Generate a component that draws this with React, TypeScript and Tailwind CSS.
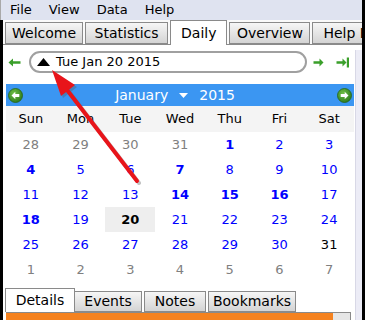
import React from 'react';

type Kind = 'other' | 'cur' | 'bold' | 'sel' | 'today';

const weeks: { d: string; kind: Kind }[][] = [
  [
    { d: '28', kind: 'other' },
    { d: '29', kind: 'other' },
    { d: '30', kind: 'other' },
    { d: '31', kind: 'other' },
    { d: '1', kind: 'bold' },
    { d: '2', kind: 'cur' },
    { d: '3', kind: 'cur' },
  ],
  [
    { d: '4', kind: 'bold' },
    { d: '5', kind: 'cur' },
    { d: '6', kind: 'cur' },
    { d: '7', kind: 'bold' },
    { d: '8', kind: 'cur' },
    { d: '9', kind: 'cur' },
    { d: '10', kind: 'cur' },
  ],
  [
    { d: '11', kind: 'cur' },
    { d: '12', kind: 'cur' },
    { d: '13', kind: 'cur' },
    { d: '14', kind: 'bold' },
    { d: '15', kind: 'bold' },
    { d: '16', kind: 'bold' },
    { d: '17', kind: 'cur' },
  ],
  [
    { d: '18', kind: 'bold' },
    { d: '19', kind: 'cur' },
    { d: '20', kind: 'sel' },
    { d: '21', kind: 'cur' },
    { d: '22', kind: 'cur' },
    { d: '23', kind: 'cur' },
    { d: '24', kind: 'cur' },
  ],
  [
    { d: '25', kind: 'cur' },
    { d: '26', kind: 'cur' },
    { d: '27', kind: 'cur' },
    { d: '28', kind: 'cur' },
    { d: '29', kind: 'cur' },
    { d: '30', kind: 'cur' },
    { d: '31', kind: 'today' },
  ],
  ['1', '2', '3', '4', '5', '6', '7'].map((d) => ({ d, kind: 'other' as const })),
];

const cellClass: Record<Kind, string> = {
  other: 'text-[#808080]',
  cur: 'text-[#0000ff]',
  bold: 'text-[#0000ff] font-bold',
  sel: 'text-black font-bold bg-[#eeeeee]',
  today: 'text-black',
};

function CircleArrow({ dir }: { dir: 'left' | 'right' }) {
  return (
    <svg width="15" height="15" viewBox="0 0 15 15">
      <defs>
        <radialGradient id={`g-${dir}`} cx="40%" cy="35%" r="70%">
          <stop offset="0%" stopColor="#6fbf45" />
          <stop offset="100%" stopColor="#2c7a1c" />
        </radialGradient>
      </defs>
      <circle cx="7.5" cy="7.5" r="7" fill={`url(#g-${dir})`} stroke="#25631a" strokeWidth="0.8" />
      {dir === 'left' ? (
        <path d="M3.5 7.5 L7.3 3.8 L7.3 6 L11.3 6 L11.3 9 L7.3 9 L7.3 11.2 Z" fill="#fff" />
      ) : (
        <path d="M11.5 7.5 L7.7 3.8 L7.7 6 L3.7 6 L3.7 9 L7.7 9 L7.7 11.2 Z" fill="#fff" />
      )}
    </svg>
  );
}

function GreenArrow({ dir, bar }: { dir: 'left' | 'right'; bar?: boolean }) {
  return dir === 'left' ? (
    <svg width="13" height="9" viewBox="0 0 13 9">
      <path d="M0.5 4.5 L5 0.5 L5 3.3 L12.5 3.3 L12.5 5.7 L5 5.7 L5 8.5 Z" fill="#3a9f2a" />
    </svg>
  ) : (
    <svg width={bar ? 13 : 11} height="11" viewBox={bar ? '0 0 13 11' : '0 0 11 11'}>
      <path d="M10.5 5.5 L6.5 1.5 L6.5 4.3 L0.5 4.3 L0.5 6.7 L6.5 6.7 L6.5 9.5 Z" fill="#3a9f2a" />
      {bar && <rect x="10.8" y="0.5" width="2.2" height="10" fill="#3a9f2a" />}
    </svg>
  );
}

function Tab({ label, active, w }: { label: string; active?: boolean; w: string }) {
  return active ? (
    <div className={`${w} h-[25px] bg-white border border-b-0 border-[#8a8a8a] flex items-center justify-center text-[14px] text-black -mb-px relative z-10`}>
      {label}
    </div>
  ) : (
    <div className={`${w} h-[22px] bg-gradient-to-b from-[#f6f6f6] to-[#d4d4d4] border border-[#8a8a8a] flex items-center justify-center text-[14px] text-black overflow-hidden whitespace-nowrap`}>
      {label}
    </div>
  );
}

export default function App() {
  return (
    <div className="w-[365px] h-[320px] relative overflow-hidden bg-white font-['DejaVu_Sans',sans-serif] border-r-[3px] border-black flex flex-col">
      {/* menu bar */}
      <div className="h-[20px] bg-[#dfe3f0] border-l border-[#a9a9a9] flex items-center gap-[17px] pl-[9px] text-[13px] text-black shrink-0">
        <span>File</span>
        <span>View</span>
        <span>Data</span>
        <span>Help</span>
      </div>

      <div className="flex-1 flex border-l-[3px] border-black min-h-0">
        <div className="flex-1 flex flex-col min-w-0">
          {/* top tabs */}
          <div className="h-[25px] flex items-end gap-[2px] pl-[2px] border-b border-[#8a8a8a] bg-[#fafafa] shrink-0">
            <Tab label="Welcome" w="w-[79px]" />
            <Tab label="Statistics" w="w-[84px]" />
            <Tab label="Daily" active w="w-[58px]" />
            <Tab label="Overview" w="w-[82px]" />
            <div className="w-[50px] h-[22px] bg-gradient-to-b from-[#f6f6f6] to-[#d4d4d4] border border-r-0 border-[#8a8a8a] flex items-center pl-[10px] text-[14px] text-black overflow-hidden whitespace-nowrap">
              Help B
            </div>
          </div>

          <div className="flex-1 flex min-h-0">
            <div className="flex-1 flex flex-col min-w-0">
              {/* date row */}
              <div className="flex items-center h-[22px] mt-[6px] pl-[5px]">
                <div className="w-[21px] flex items-center">
                  <GreenArrow dir="left" />
                </div>
                <div className="w-[278px] h-[22px] rounded-full border-2 border-[#a0a0a0] flex items-center pl-[6px] gap-[6px] text-[13px] text-black">
                  <svg width="13" height="8" viewBox="0 0 13 8">
                    <path d="M0 8 L6.5 0 L13 8 Z" fill="#000" />
                  </svg>
                  <span>Tue Jan 20 2015</span>
                </div>
                <div className="ml-[6px] flex items-center">
                  <GreenArrow dir="right" />
                </div>
                <div className="ml-[12px] flex items-center">
                  <GreenArrow dir="right" bar />
                </div>
              </div>

              {/* calendar */}
              <div className="mt-[11px] ml-[3px] w-[348px]">
                <div className="h-[22px] bg-[#3b96f2] flex items-center px-[2px] text-white text-[14px]">
                  <CircleArrow dir="left" />
                  <div className="flex-1 flex items-center justify-center gap-[11px] pr-[10px]">
                    <span>January</span>
                    <svg width="9" height="5" viewBox="0 0 9 5">
                      <path d="M0 0 L9 0 L4.5 5 Z" fill="#fff" />
                    </svg>
                    <span>2015</span>
                  </div>
                  <CircleArrow dir="right" />
                </div>
                <div className="h-[26px] bg-[#f4f4f4] grid grid-cols-7 items-center text-center text-[13px] text-black">
                  {['Sun', 'Mon', 'Tue', 'Wed', 'Thu', 'Fri', 'Sat'].map((n) => (
                    <span key={n}>{n}</span>
                  ))}
                </div>
                <div className="grid grid-cols-7 text-center text-[13px]">
                  {weeks.flat().map((c, i) => (
                    <div key={i} className={`h-[25px] flex items-center justify-center ${cellClass[c.kind]}`}>
                      {c.d}
                    </div>
                  ))}
                </div>
              </div>

              {/* bottom tabs */}
              <div className="mt-auto h-[25px] flex items-end pl-[2px] shrink-0">
                <div className="w-[70px] h-[24px] bg-white border border-b-0 border-[#8a8a8a] flex items-center justify-center text-[14px] text-black">
                  Details
                </div>
                <div className="w-[67px] h-[21px] bg-gradient-to-b from-[#f6f6f6] to-[#d4d4d4] border border-l-0 border-[#8a8a8a] flex items-center justify-center text-[14px]">
                  Events
                </div>
                <div className="w-[62px] h-[21px] ml-[2px] bg-gradient-to-b from-[#f6f6f6] to-[#d4d4d4] border border-[#8a8a8a] flex items-center justify-center text-[14px]">
                  Notes
                </div>
                <div className="w-[88px] h-[21px] ml-[2px] bg-gradient-to-b from-[#f6f6f6] to-[#d4d4d4] border border-[#8a8a8a] flex items-center justify-center text-[14px]">
                  Bookmarks
                </div>
              </div>
              <div className="h-[8px] flex border-t border-[#8a8a8a] ml-[3px] w-[345px] shrink-0">
                <div className="flex-1 bg-[#f5821f]" />
                <div className="w-[18px] bg-[#e6e6e6] border-r border-[#8a8a8a]" />
              </div>
            </div>
            {/* scroll strip */}
            <div className="w-[7px] bg-[#ececf6] mt-[5px] border-l border-[#d8d8e6]" />
          </div>
        </div>
      </div>

      {/* annotation arrow */}
      <svg className="absolute left-0 top-0 pointer-events-none" width="365" height="320" viewBox="0 0 365 320">
        <g transform="translate(2,2)" opacity="0.35">
          <line x1="137" y1="181" x2="64" y2="86" stroke="#555" strokeWidth="4" strokeLinecap="round" />
          <path d="M52 70 L75 85 L61 96 Z" fill="#555" />
        </g>
        <line x1="137" y1="181" x2="64" y2="86" stroke="#e8141a" strokeWidth="4" strokeLinecap="round" />
        <path d="M52 70 L75 85 L61 96 Z" fill="#e8141a" />
      </svg>
    </div>
  );
}
